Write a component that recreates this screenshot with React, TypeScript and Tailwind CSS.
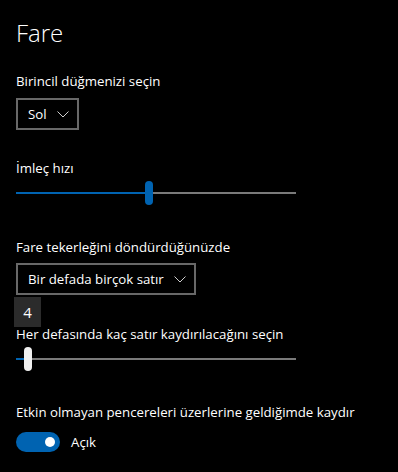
function Chevron() {
  return (
    <svg width="12" height="7" viewBox="0 0 12 7" className="shrink-0">
      <polyline points="0.5,0.5 6,6 11.5,0.5" fill="none" stroke="#cfcfcf" strokeWidth="1" />
    </svg>
  )
}

function Dropdown({ label }: { label: string }) {
  return (
    <div className="inline-flex items-center h-[32px] border-2 border-[#686868] pl-[10px] pr-[8px] gap-[10px] text-[13.25px] leading-[20px] text-white">
      <span>{label}</span>
      <Chevron />
    </div>
  )
}

function Slider({ pos, light }: { pos: number; light?: boolean }) {
  return (
    <div className="relative w-[280px] h-[24px]">
      <div className="absolute left-0 right-0 top-[11px] h-[2px] bg-[#7a7a7a]" />
      <div className="absolute left-0 top-[11px] h-[2px] bg-[#0063b1]" style={{ width: pos }} />
      <div
        className={`absolute top-0 w-[8px] h-[24px] rounded-full ${light ? 'bg-[#f0f0f0]' : 'bg-[#0063b1]'}`}
        style={{ left: pos }}
      />
    </div>
  )
}

export default function App() {
  return (
    <div
      className="w-[398px] h-[472px] bg-black text-white px-4 overflow-hidden text-[13.25px] leading-[20px]"
      style={{ fontFamily: '"Open Sans", "Noto Sans", sans-serif' }}
    >
      <h1 className="text-[24px] font-light leading-[24px] pt-[21px]">Fare</h1>

      <p className="mt-[26px]">Birincil düğmenizi seçin</p>
      <div className="mt-[7px] h-[32px]">
        <Dropdown label="Sol" />
      </div>

      <p className="mt-[28px]">İmleç hızı</p>
      <div className="mt-[3px]">
        <Slider pos={129} />
      </div>

      <p className="mt-[32px]">Fare tekerleğini döndürdüğünüzde</p>
      <div className="mt-[6px] h-[32px]">
        <Dropdown label="Bir defada birçok satır" />
      </div>
      <div className="-ml-[2px] mt-[2px] w-[27px] h-[30px] bg-[#2b2b2b] flex items-center justify-center text-[15px]">4</div>
      <p className="-mt-[3px]">Her defasında kaç satır kaydırılacağını seçin</p>
      <div className="mt-[3px]">
        <Slider pos={8} light />
      </div>

      <p className="mt-[31px]">Etkin olmayan pencereleri üzerlerine geldiğimde kaydır</p>
      <div className="flex items-center mt-[10px] gap-[11px]">
        <div className="w-[44px] h-[20px] rounded-full bg-[#0063b1] flex items-center justify-end pr-[5px]">
          <div className="w-[10px] h-[10px] rounded-full bg-white" />
        </div>
        <span>Açık</span>
      </div>
    </div>
  )
}
